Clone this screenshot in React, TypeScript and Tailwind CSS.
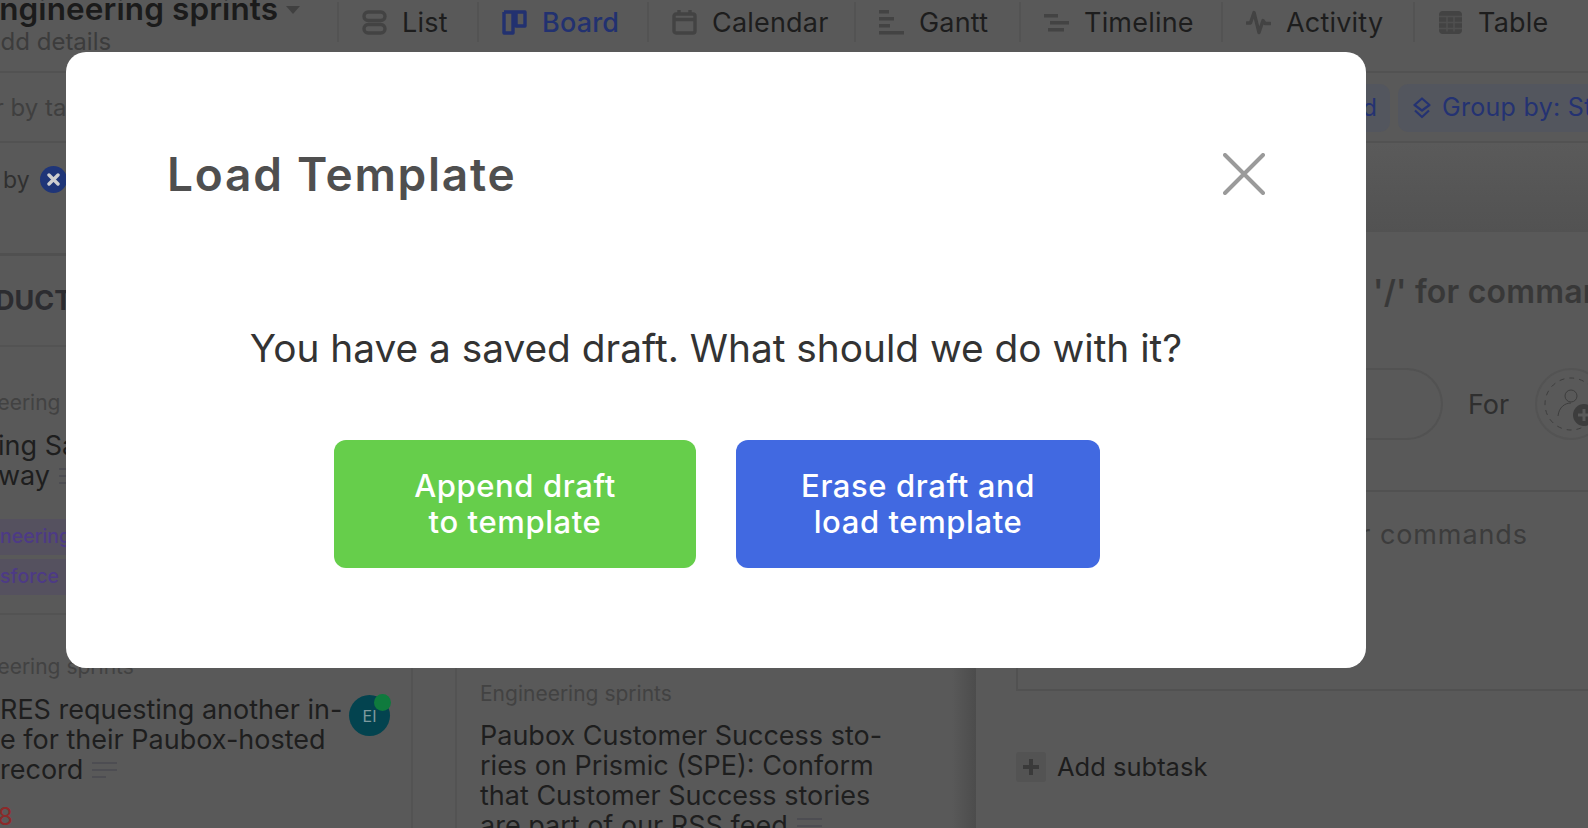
import type { ReactNode } from 'react';

const font = { fontFamily: 'Inter, "Liberation Sans", sans-serif' };

function ListIcon() {
	return (
		<svg width="25" height="25" viewBox="0 0 25 25" fill="none" stroke="#434343" strokeWidth="3.4">
			<rect x="2" y="2" width="21" height="8.5" rx="4.2" />
			<rect x="2" y="14.5" width="21" height="8.5" rx="4.2" />
		</svg>
	);
}

function BoardIcon() {
	return (
		<svg width="25" height="25" viewBox="0 0 25 25" fill="none" stroke="#223170" strokeWidth="3.4" strokeLinejoin="round">
			<path d="M2 2h21v14h-9V2M2 2v21h9V2" />
		</svg>
	);
}

function CalendarIcon() {
	return (
		<svg width="25" height="25" viewBox="0 0 25 25" fill="none" stroke="#434343" strokeWidth="3.4">
			<rect x="2" y="4" width="21" height="19" rx="2" />
			<path d="M2 9.5h21M7 0v4M18 0v4" />
		</svg>
	);
}

function GanttIcon() {
	return (
		<svg width="25" height="25" viewBox="0 0 25 25" fill="#434343">
			<rect x="0" y="0" width="10" height="3.5" />
			<rect x="0" y="7" width="15" height="3.5" />
			<rect x="0" y="14" width="11" height="3.5" />
			<rect x="0" y="21" width="25" height="3.5" />
		</svg>
	);
}

function TimelineIcon() {
	return (
		<svg width="25" height="25" viewBox="0 0 25 25" fill="#434343">
			<rect x="0" y="4" width="14" height="3.5" />
			<rect x="6" y="11" width="19" height="3.5" />
			<rect x="4" y="18" width="16" height="3.5" />
		</svg>
	);
}

function ActivityIcon() {
	return (
		<svg width="25" height="25" viewBox="0 0 25 25" fill="none" stroke="#434343" strokeWidth="3.4" strokeLinecap="round" strokeLinejoin="round">
			<path d="M1 13h3.5L8 2.5l5 20 4-12 2 3h5" />
		</svg>
	);
}

function TableIcon() {
	return (
		<svg width="25" height="25" viewBox="0 0 25 25">
			<rect x="1" y="1" width="23" height="23" rx="4" fill="#434343" />
			<path d="M9 6.5v15M16 6.5v15M1 6.5h23M1 12.5h23M1 18.5h23" stroke="#4f4f4f" strokeWidth="1.6" />
		</svg>
	);
}

function GroupIcon() {
	return (
		<svg width="18" height="22" viewBox="0 0 18 22" fill="none" stroke="#243272" strokeWidth="2.2" strokeLinejoin="round">
			<path d="M9 1.5 16.5 8 9 13.5 1.5 8Z" />
			<path d="M2 13.5 9 20l7-6.5" />
		</svg>
	);
}

function NoteIcon() {
	return (
		<svg width="25" height="17" viewBox="0 0 25 17" fill="#4d4d52" className="ml-[9px] inline-block align-[-1px]">
			<rect width="25" height="2" />
			<rect y="7" width="25" height="2" />
			<rect y="14" width="14" height="2" />
		</svg>
	);
}

function Tab({ icon, label, active, width }: { icon: ReactNode; label: string; active?: boolean; width: string }) {
	return (
		<div className={`flex h-10 items-center gap-[15px] border-l-2 border-[#535353] pl-[23px] ${width}`}>
			{icon}
			<span className={`whitespace-nowrap pt-[3px] text-[27px] tracking-[0.2px] ${active ? 'font-medium text-[#223170]' : 'text-[#1d1d1d]'}`}>{label}</span>
		</div>
	);
}

function Background() {
	return (
		<div className="flex h-full w-full flex-col bg-[#595959]">
			<header className="flex h-[73px] shrink-0 border-b-2 border-[#525252]">
				<div className="w-[337px] shrink-0">
					<div className="-ml-[20px] -mt-[10px] flex items-center gap-[8px] whitespace-nowrap">
						<span className="text-[31.5px] font-semibold leading-[38px] tracking-[0.1px] text-[#1b1b1b]">Engineering sprints</span>
						<span className="mt-[2px] h-0 w-0 border-x-[7px] border-t-[8px] border-x-transparent border-t-[#404040]" />
					</div>
					<div className="-ml-[16px] mt-[1px] whitespace-nowrap text-[24px] leading-[26px] text-[#3c3c3c]">Add details</div>
				</div>
				<div className="flex h-[42px] items-start pt-[2px]">
					<Tab width="w-[140px]" icon={<ListIcon />} label="List" />
					<Tab width="w-[170px]" icon={<BoardIcon />} label="Board" active />
					<Tab width="w-[207px]" icon={<CalendarIcon />} label="Calendar" />
					<Tab width="w-[165px]" icon={<GanttIcon />} label="Gantt" />
					<Tab width="w-[202px]" icon={<TimelineIcon />} label="Timeline" />
					<Tab width="w-[192px]" icon={<ActivityIcon />} label="Activity" />
					<Tab width="w-[150px]" icon={<TableIcon />} label="Table" />
				</div>
			</header>

			<div className="flex h-[70px] shrink-0 items-center border-b-2 border-[#525252] pt-[2px]">
				<div className="flex w-[1398px] shrink-0 items-center justify-between">
					<span className="-ml-[53px] whitespace-nowrap text-[24px] text-[#3f3f3f]">Filter by tag</span>
					<div className="mr-[8px] flex h-[48px] items-center rounded-[10px] bg-[#53565e] pl-6 pr-[13px] text-[24px] text-[#243272]">Show closed</div>
				</div>
				<div className="flex h-[48px] shrink-0 items-center gap-[11px] whitespace-nowrap rounded-l-[10px] bg-[#53565e] pl-[15px] pr-6 text-[25px] tracking-[0.3px] text-[#243272]">
					<GroupIcon />
					Group by: Status
				</div>
			</div>

			<div className="flex min-h-0 flex-1">
				<div className="flex w-[952px] shrink-0 flex-col">
					<div className="flex h-[113px] shrink-0 items-start border-b-[3px] border-[#505050] pl-[3px] pt-[20px]">
						<span className="text-[23px] leading-[34px] text-[#303030]">by</span>
						<span className="ml-[10px] mt-[3px] flex h-[27px] w-[27px] items-center justify-center rounded-full bg-[#1f3578]">
							<svg width="13" height="13" viewBox="0 0 13 13" stroke="#cfcfcf" strokeWidth="3.4" strokeLinecap="round">
								<path d="M2 2l9 9M11 2l-9 9" />
							</svg>
						</span>
					</div>
					<div className="flex min-h-0 flex-1">
						<div className="w-[413px] shrink-0 border-r-2 border-[#535353]">
							<div className="flex h-[91px] items-center border-b-2 border-[#535353] pt-[2px]">
								<span className="-ml-[5px] text-[27px] font-bold text-[#2c2c30]">DUCT</span>
							</div>
							<div className="h-[268px] border-b-2 border-[#535353] pt-[42px]">
								<div className="-ml-[58px] whitespace-nowrap text-[21px] leading-[28px] text-[#424242]">Engineering sprints</div>
								<div className="mt-[14px] whitespace-nowrap text-[27px] leading-[30px] text-[#1e1e1e]">
									<div className="-ml-[2px]">ing Sa</div>
									<div className="-ml-[2px] flex items-center">way<NoteIcon /></div>
								</div>
								<div className="mt-[28px] flex flex-col gap-[4px] text-[19.5px] font-medium text-[#4d3a86]">
									<div className="flex h-[36px] items-center whitespace-nowrap bg-[#55515f]">neering</div>
									<div className="flex h-[36px] items-center whitespace-nowrap bg-[#55515f]">sforce</div>
								</div>
							</div>
							<div className="pt-[38px]">
								<div className="-ml-[58px] whitespace-nowrap text-[21px] leading-[28px] text-[#424242]">Engineering sprints</div>
								<div className="mt-[14px] flex items-start justify-between pr-[21px]">
									<div className="whitespace-nowrap text-[27px] leading-[30px] text-[#1e1e1e]">
										<div>RES requesting another in-</div>
										<div>e for their Paubox-hosted</div>
										<div className="flex items-center">record<NoteIcon /></div>
									</div>
									<div className="relative flex h-[41px] w-[41px] shrink-0 items-center justify-center rounded-full bg-[#03434f] text-[16px] text-[#7f9a9f]">
										EI
										<span className="absolute -right-[1px] -top-[1px] h-[17px] w-[17px] rounded-full bg-[#0f7a3d]" />
									</div>
								</div>
								<div className="-ml-[2px] mt-[18px] text-[24px] leading-[28px] text-[#8c2a2a]">8</div>
							</div>
						</div>
						<div className="w-[44px] shrink-0 border-r-2 border-[#535353]" />
						<div className="min-w-0 flex-1 pl-[23px] pt-[424px]">
							<div className="whitespace-nowrap text-[21px] leading-[28px] text-[#424242]">Engineering sprints</div>
							<div className="mt-[13px] whitespace-nowrap text-[27px] leading-[30px] text-[#1e1e1e]">
								<div>Paubox Customer Success sto-</div>
								<div>ries on Prismic (SPE): Conform</div>
								<div>that Customer Success stories</div>
								<div className="flex items-center">are part of our RSS feed<NoteIcon /></div>
							</div>
						</div>
					</div>
				</div>

				<div className="w-[24px] shrink-0 bg-gradient-to-r from-[#595959] to-[#4c4c4c]" />

				<div className="min-w-0 flex-1 overflow-hidden">
					<div className="h-[89px] bg-gradient-to-b from-[#5a5a5a] to-[#525252]" />
					<div className="pl-[40px]">
						<div className="-ml-[40px] whitespace-nowrap pl-[96px] pt-[40px] text-[32px] font-semibold leading-[40px] tracking-[0.2px] text-[#383838]">
							Task Name or type '/' for commands
						</div>
						<div className="mt-[56px] flex h-[72px] items-center">
							<div className="h-full w-[427px] shrink-0 rounded-r-full border-2 border-l-0 border-[#525252]" />
							<span className="ml-[25px] pt-[2px] text-[27px] text-[#2f2f2f]">For</span>
							<div className="ml-[26px] flex h-[72px] w-[72px] shrink-0 items-center justify-center rounded-full border-2 border-[#535353]">
								<svg width="56" height="56" viewBox="0 0 56 56" fill="none" stroke="#3d3d3d">
									<circle cx="28" cy="28" r="26" strokeDasharray="5 5" />
									<circle cx="28" cy="20" r="6" />
									<path d="M15 40c1-9 7-13 13-13" />
									<circle cx="41" cy="39" r="11" fill="#3d3d3d" stroke="none" />
									<path d="M41 33v12M35 39h12" stroke="#595959" strokeWidth="3" />
								</svg>
							</div>
						</div>
						<div className="mt-[50px] h-[201px] whitespace-nowrap border-b-2 border-l-2 border-t-2 border-[#515151] pl-[8px] pt-[26px] text-[27px] leading-[34px] tracking-[0.9px] text-[#3c3c3c]">
							Description or type '/' for commands
						</div>
						<div className="mt-[60px] flex items-center gap-[11px]">
							<span className="flex h-[30px] w-[30px] items-center justify-center rounded-[3px] bg-[#535353]">
								<svg width="16" height="16" viewBox="0 0 16 16" fill="#3a3a3a">
									<rect x="6" y="0" width="4" height="16" />
									<rect x="0" y="6" width="16" height="4" />
								</svg>
							</span>
							<span className="whitespace-nowrap text-[25.5px] leading-[32px] text-[#1d1d1d]">Add subtask</span>
						</div>
					</div>
				</div>
			</div>
		</div>
	);
}

function LoadTemplateModal() {
	return (
		<div className="absolute left-[66px] top-[52px] flex h-[616px] w-[1300px] flex-col rounded-[20px] bg-white">
			<div className="flex items-center justify-between pl-[101px] pr-[101px] pt-[93px]">
				<h2 className="text-[46px] font-semibold leading-[58px] tracking-[1.75px] text-[#4f4f4f]">Load Template</h2>
				<svg width="42" height="42" viewBox="0 0 42 42" stroke="#9a9a9a" strokeWidth="4" strokeLinecap="round">
					<path d="M2 2l38 38M40 2L2 40" />
				</svg>
			</div>
			<p className="mt-[115px] text-center text-[38.8px] leading-[60px] text-[#333333]">You have a saved draft. What should we do with it?</p>
			<div className="mt-[62px] flex justify-center gap-[40px] pl-[2px]">
				<button className="h-[128px] w-[362px] rounded-[12px] bg-[#66ce4b] text-[31px] font-medium leading-[36px] tracking-[0.6px] text-white">
					Append draft
					<br />
					to template
				</button>
				<button className="h-[128px] w-[364px] rounded-[12px] bg-[#4169e1] text-[31px] font-medium leading-[36px] tracking-[0.6px] text-white">
					Erase draft and
					<br />
					load template
				</button>
			</div>
		</div>
	);
}

export default function App() {
	return (
		<div className="relative h-[828px] w-[1588px] overflow-hidden" style={font}>
			<Background />
			<LoadTemplateModal />
		</div>
	);
}
